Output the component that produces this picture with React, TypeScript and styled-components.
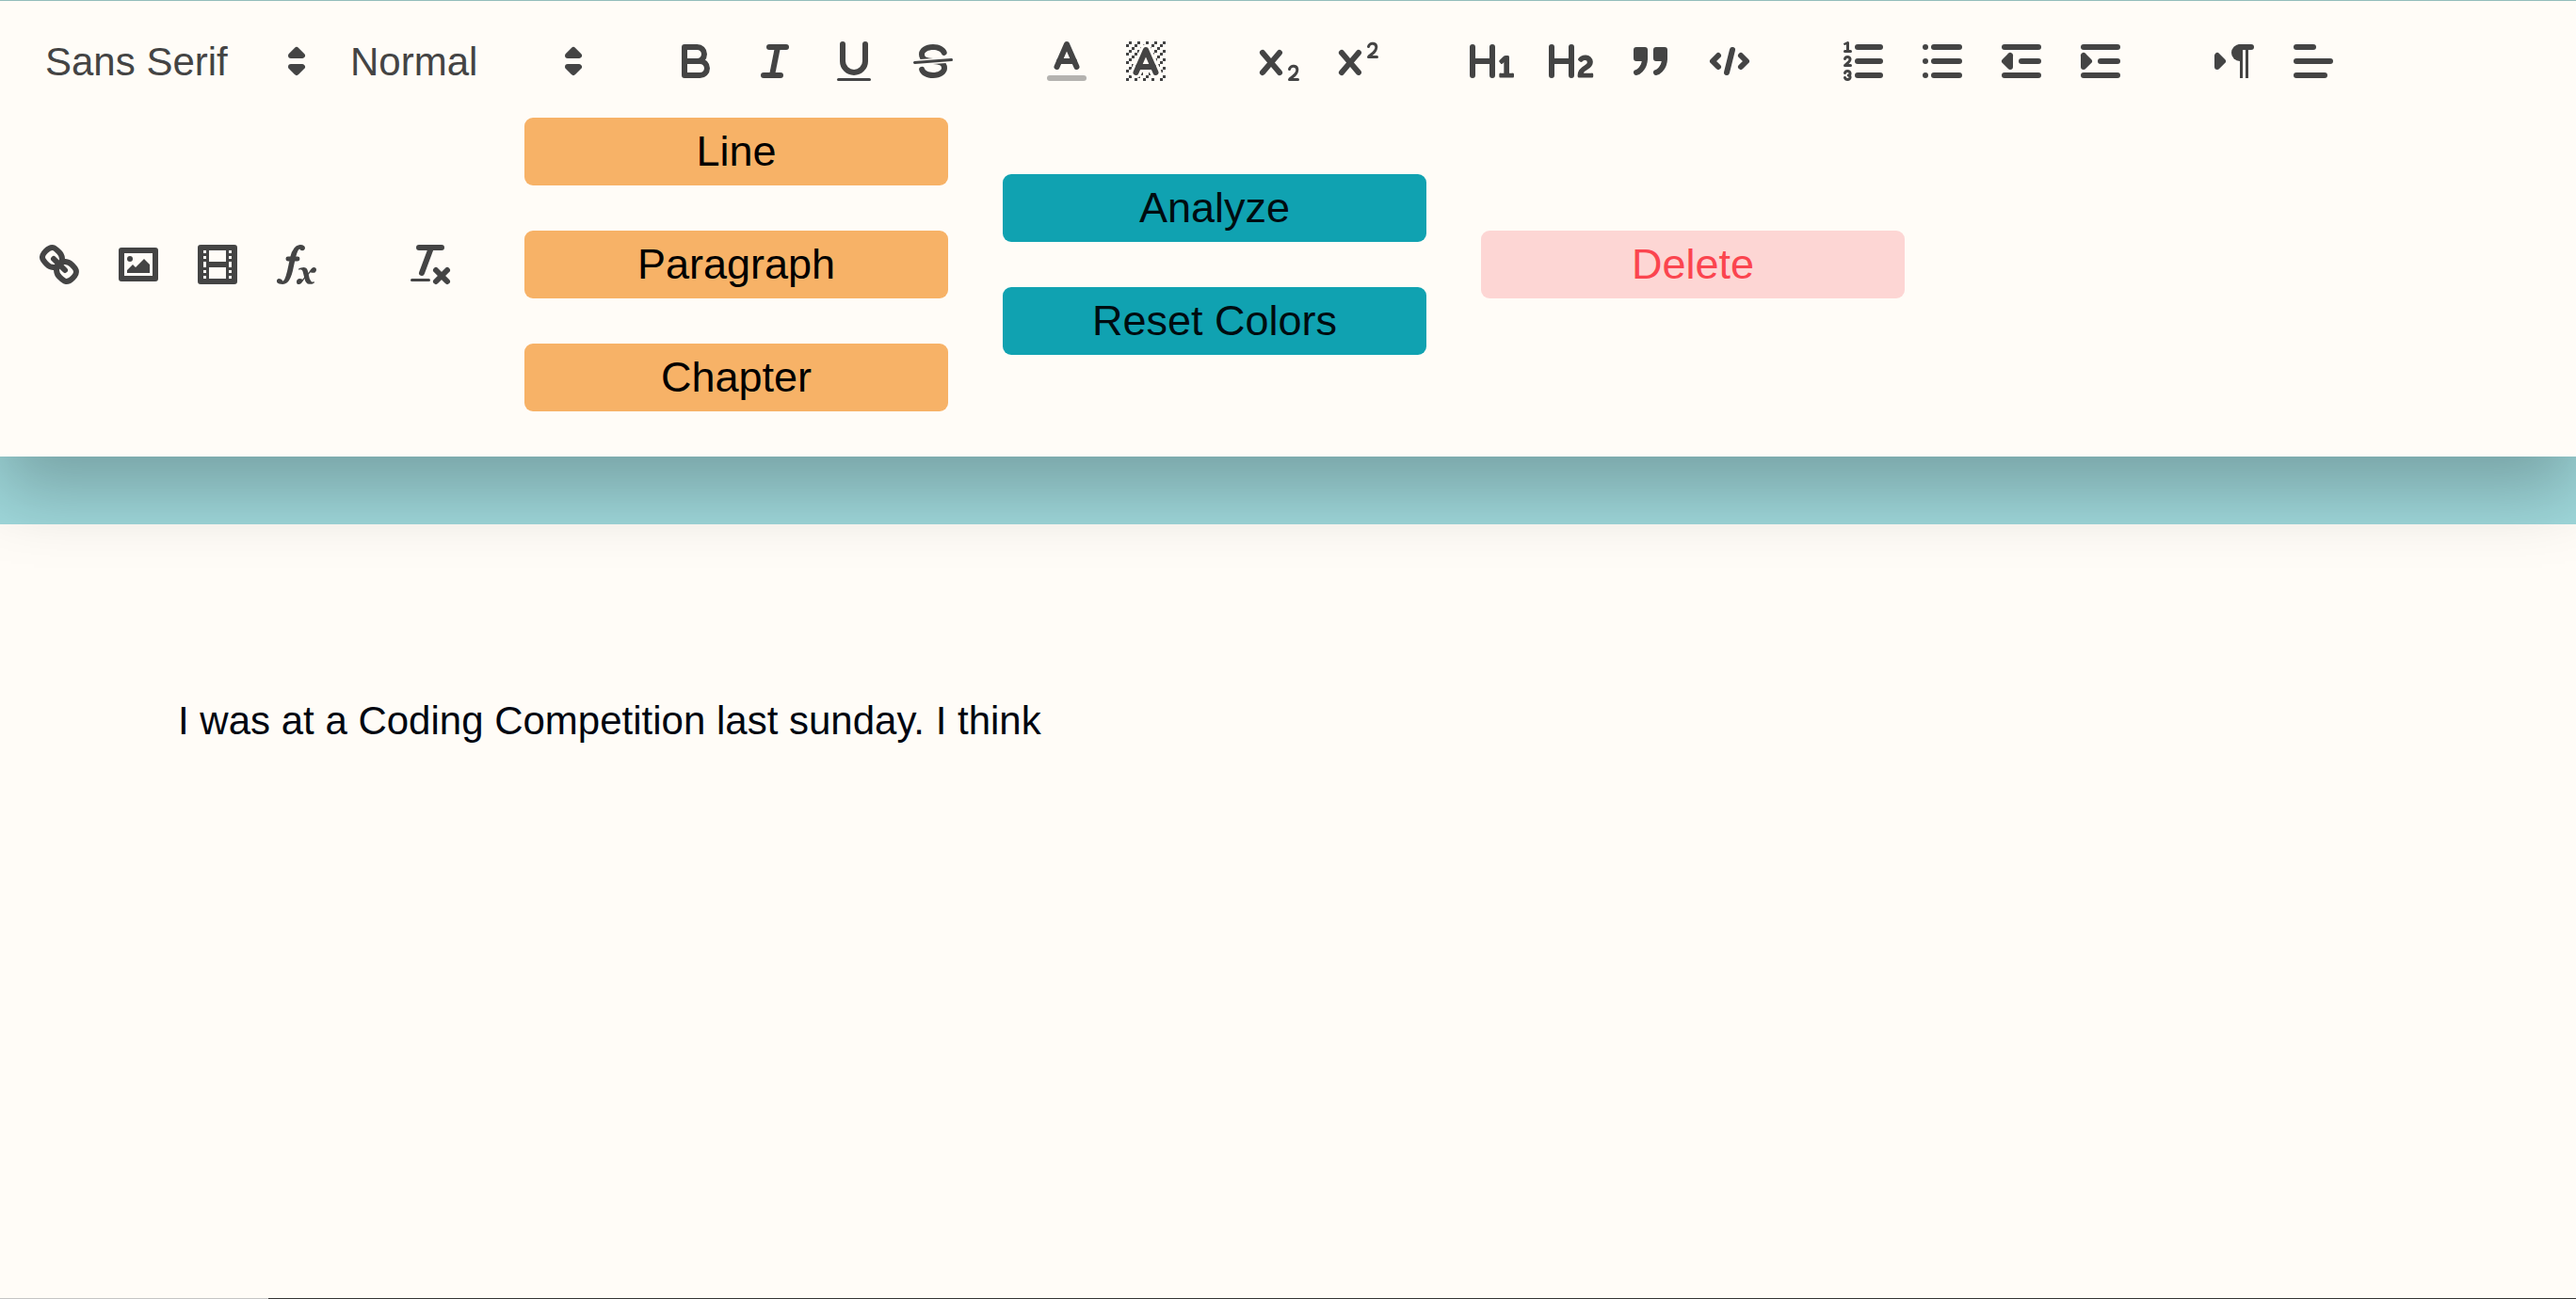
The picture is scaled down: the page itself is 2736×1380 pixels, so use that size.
import React from "react";
import styled, { createGlobalStyle } from "styled-components";

const ink = "#444";
const paper = "#fffcf7";

const GlobalStyle = createGlobalStyle`
  * { box-sizing: border-box; }
  body {
    margin: 0;
    background: #9fd8db;
    font-family: "Liberation Sans", Arial, Helvetica, sans-serif;
  }
`;

const Page = styled.div`
  display: flex;
  flex-direction: column;
  min-height: 100vh;
`;

const Toolbar = styled.div`
  position: relative;
  z-index: 1;
  display: flex;
  flex-wrap: wrap;
  align-items: center;
  column-gap: 58px;
  padding: 28px 21px 24px;
  border-top: 1px solid #93bdbb;
  background: ${paper};
  box-shadow: 0 36px 72px rgba(0, 0, 0, 0.25);
`;

const Group = styled.div`
  display: flex;
  align-items: center;
`;

const IconButton = styled.button`
  display: flex;
  width: 84px;
  height: 72px;
  padding: 9px 15px;
  border: 0;
  background: none;
  cursor: pointer;
`;

const Icon = styled.svg`
  display: block;
  width: 54px;
  height: 54px;
  fill: ${ink};
  stroke: none;

  .s {
    fill: none;
    stroke: ${ink};
    stroke-width: 2;
    stroke-linecap: round;
    stroke-linejoin: round;
  }
  .thin { stroke-width: 1; }
  .solid { fill: ${ink}; }
  .even { fill-rule: evenodd; }
  .faint { opacity: 0.4; }
`;

const Picker = styled.label<{ $width: number }>`
  display: grid;
  align-items: center;
  width: ${(p) => p.$width}px;
  height: 72px;

  > * { grid-area: 1 / 1; }
  > svg {
    justify-self: end;
    margin-right: 3px;
    pointer-events: none;
  }
`;

const PickerSelect = styled.select`
  width: 100%;
  height: 72px;
  padding: 0 0 0 24px;
  border: 3px solid transparent;
  appearance: none;
  background: none;
  color: ${ink};
  font-family: inherit;
  font-size: 42px;
  font-weight: 500;
  cursor: pointer;
`;

const ActionColumn = styled.div`
  display: flex;
  flex-direction: column;
  gap: 48px;
  padding: 24px 0;
`;

const tones = {
  select: { background: "#f7b267", color: "#000" },
  run: { background: "#10a2b1", color: "#000c10" },
  danger: { background: "#fdd6d4", color: "#fb454f" },
};

const ActionButton = styled.button<{ $tone: keyof typeof tones }>`
  width: 450px;
  height: 72px;
  padding: 0;
  border: 0;
  border-radius: 9px;
  background: ${(p) => tones[p.$tone].background};
  color: ${(p) => tones[p.$tone].color};
  font-family: inherit;
  font-size: 45px;
  cursor: pointer;
`;

const Editor = styled.textarea`
  flex: 1;
  display: block;
  margin: 72px 0 0;
  padding: 179px 189px;
  border: 0;
  outline: 0;
  resize: none;
  background: ${paper};
  color: #000610;
  font-family: inherit;
  font-size: 42px;
  line-height: 60px;
`;

const BottomEdge = styled.div`
  display: flex;
  height: 1px;
  background: #333;
`;

const BottomEdgeStart = styled.div`
  width: 285px;
  background: #c4c4c4;
`;

const dots = [
  [4, 4], [2, 6], [3, 5], [4, 7], [2, 12], [2, 9], [2, 15], [3, 8], [12, 2], [11, 3],
  [2, 3], [6, 2], [3, 2], [5, 3], [9, 2], [15, 14], [13, 7], [15, 5], [14, 6], [15, 8],
  [14, 9], [14, 3], [15, 2], [12, 5], [13, 4], [9, 14], [8, 15], [5, 15], [11, 15],
  [14, 15], [15, 11],
];

const icons = {
  bold: (
    <>
      <path className="s" d="M5,4H9.5A2.5,2.5,0,0,1,12,6.5v0A2.5,2.5,0,0,1,9.5,9H5A0,0,0,0,1,5,9V4A0,0,0,0,1,5,4Z" />
      <path className="s" d="M5,9h5.5A2.5,2.5,0,0,1,13,11.5v0A2.5,2.5,0,0,1,10.5,14H5a0,0,0,0,1,0,0V9A0,0,0,0,1,5,9Z" />
    </>
  ),
  italic: (
    <>
      <line className="s" x1="7" x2="13" y1="4" y2="4" />
      <line className="s" x1="5" x2="11" y1="14" y2="14" />
      <line className="s" x1="8" x2="10" y1="14" y2="4" />
    </>
  ),
  underline: (
    <>
      <path className="s" d="M5,3V9a4.012,4.012,0,0,0,4,4H9a4.012,4.012,0,0,0,4-4V3" />
      <rect height="1" rx="0.5" ry="0.5" width="12" x="3" y="15" />
    </>
  ),
  strike: (
    <>
      <line className="s thin" x1="15.5" x2="2.5" y1="8.5" y2="9.5" />
      <path d="M9.007,8C6.542,7.791,6,7.519,6,6.5,6,5.792,7.283,5,9,5c1.571,0,2.765.679,2.969,1.309a1,1,0,0,0,1.9-.617C13.356,4.106,11.354,3,9,3,6.2,3,4,4.538,4,6.5a3.2,3.2,0,0,0,.5,1.843Z" />
      <path d="M8.984,10C11.457,10.208,12,10.479,12,11.5c0,.708-1.283,1.5-3,1.5-1.571,0-2.765-.679-2.969-1.309a1,1,0,1,0-1.9.617C4.644,13.894,6.646,15,9,15c2.8,0,5-1.538,5-3.5a3.2,3.2,0,0,0-.5-1.843Z" />
    </>
  ),
  color: (
    <>
      <line className="s faint" x1="3" x2="15" y1="15" y2="15" />
      <polyline className="s" points="5.5 11 9 3 12.5 11" />
      <line className="s" x1="11.63" x2="6.38" y1="9" y2="9" />
    </>
  ),
  background: (
    <>
      {dots.map(([x, y]) => (
        <rect key={`${x}-${y}`} x={x} y={y} width="1" height="1" />
      ))}
      <polygon points="6 6.868 6 6 5 6 5 7 5.942 7 6 6.868" />
      <polygon points="6.817 5 6 5 6 6 6.38 6 6.817 5" />
      <polygon points="4 11.439 4 11 3 11 3 12 3.755 12 4 11.439" />
      <polygon points="4.63 10 4 10 4 11 4.192 11 4.63 10" />
      <path d="M10.832,4.2L11,4.582V4H10.708A1.948,1.948,0,0,1,10.832,4.2Z" />
      <path d="M7,4.582L7.168,4.2A1.929,1.929,0,0,1,7.292,4H7V4.582Z" />
      <path d="M8,13H7.683l-0.351.8a1.933,1.933,0,0,1-.124.2H8V13Z" />
      <path d="M9,3H8V3.282A1.985,1.985,0,0,1,9,3Z" />
      <polygon points="13.447 10.174 13.469 10.225 13.472 10.232 13.808 11 14 11 14 10 13.37 10 13.447 10.174" />
      <path d="M3.775,14H3v1H4V14.314A1.97,1.97,0,0,1,3.775,14Z" />
      <polygon points="12 6.868 12 6 11.62 6 12 6.868" />
      <polygon points="12.933 9 13 9 13 8 12.495 8 12.933 9" />
      <path d="M6,14.926V15H7V14.316A1.993,1.993,0,0,1,6,14.926Z" />
      <path d="M10.668,13.8L10.317,13H10v1h0.792A1.947,1.947,0,0,1,10.668,13.8Z" />
      <path d="M14.332,12.2a1.99,1.99,0,0,1,.166.8H15V12H14.245Z" />
      <polyline className="s" points="5.5 13 9 5 12.5 13" />
      <line className="s" x1="11.63" x2="6.38" y1="11" y2="11" />
    </>
  ),
  subscript: (
    <>
      <path d="M15.5,15H13.861a3.858,3.858,0,0,0,1.914-2.975,1.8,1.8,0,0,0-1.6-1.751A1.921,1.921,0,0,0,12.021,11.7a0.50013,0.50013,0,1,0,.957.291h0a0.914,0.914,0,0,1,1.053-.725,0.81,0.81,0,0,1,.744.762c0,1.076-1.16971,1.86982-1.93971,2.43082A1.45639,1.45639,0,0,0,12,15.5a0.5,0.5,0,0,0,.5.5h3A0.5,0.5,0,0,0,15.5,15Z" />
      <path d="M9.65,5.241a1,1,0,0,0-1.409.108L6,7.964,3.759,5.349A1,1,0,0,0,2.192,6.59178Q2.21541,6.6213,2.241,6.649L4.684,9.5,2.241,12.35A1,1,0,0,0,3.71,13.70722q0.02557-.02768.049-0.05722L6,11.036,8.241,13.65a1,1,0,1,0,1.567-1.24277Q9.78459,12.3777,9.759,12.35L7.316,9.5,9.759,6.651A1,1,0,0,0,9.65,5.241Z" />
    </>
  ),
  superscript: (
    <>
      <path d="M15.5,7H13.861a4.015,4.015,0,0,0,1.914-2.975,1.8,1.8,0,0,0-1.6-1.751A1.922,1.922,0,0,0,12.021,3.7a0.5,0.5,0,1,0,.957.291,0.917,0.917,0,0,1,1.053-.725,0.81,0.81,0,0,1,.744.762c0,1.077-1.164,1.925-1.934,2.486A1.423,1.423,0,0,0,12,7.5a0.5,0.5,0,0,0,.5.5h3A0.5,0.5,0,0,0,15.5,7Z" />
      <path d="M9.651,5.241a1,1,0,0,0-1.41.108L6,7.964,3.759,5.349a1,1,0,1,0-1.519,1.3L4.683,9.5,2.241,12.35a1,1,0,1,0,1.519,1.3L6,11.036,8.241,13.65a1,1,0,0,0,1.519-1.3L7.317,9.5,9.759,6.651A1,1,0,0,0,9.651,5.241Z" />
    </>
  ),
  header1: (
    <path d="M10,4V14a1,1,0,0,1-2,0V10H3v4a1,1,0,0,1-2,0V4A1,1,0,0,1,3,4V8H8V4a1,1,0,0,1,2,0Zm6.06787,9.209H14.98975V7.59863a.54085.54085,0,0,0-.605-.60547h-.62744a1.01119,1.01119,0,0,0-.748.29688L11.645,8.56641a.5435.5435,0,0,0-.022.8584l.28613.30762a.53861.53861,0,0,0,.84717.0332l.09912-.08789a1.2137,1.2137,0,0,0,.2417-.35254h.02246s-.01123.30859-.01123.60547V13.209H12.041a.54085.54085,0,0,0-.605.60547v.43945a.54085.54085,0,0,0,.605.60547h4.02686a.54085.54085,0,0,0,.605-.60547v-.43945A.54085.54085,0,0,0,16.06787,13.209Z" />
  ),
  header2: (
    <path d="M16.73975,13.81445v.43945a.54085.54085,0,0,1-.605.60547H11.855a.58392.58392,0,0,1-.64893-.60547V14.0127c0-2.90527,3.39941-3.42187,3.39941-4.55469a.77675.77675,0,0,0-.84717-.78125,1.17684,1.17684,0,0,0-.83594.38477c-.2749.26367-.561.374-.85791.13184l-.4292-.34082c-.30811-.24219-.38525-.51758-.1543-.81445a2.97155,2.97155,0,0,1,2.45361-1.17676,2.45393,2.45393,0,0,1,2.68408,2.40918c0,2.45312-3.1792,2.92676-3.27832,3.93848h2.79443A.54085.54085,0,0,1,16.73975,13.81445ZM9,3A.99974.99974,0,0,0,8,4V8H3V4A1,1,0,0,0,1,4V14a1,1,0,0,0,2,0V10H8v4a1,1,0,0,0,2,0V4A.99974.99974,0,0,0,9,3Z" />
  ),
  blockquote: (
    <>
      <rect className="s solid" height="3" width="3" x="4" y="5" />
      <rect className="s solid" height="3" width="3" x="11" y="5" />
      <path className="s solid even" d="M7,8c0,4.031-3,5-3,5" />
      <path className="s solid even" d="M14,8c0,4.031-3,5-3,5" />
    </>
  ),
  code: (
    <>
      <polyline className="s" points="5 7 3 9 5 11" />
      <polyline className="s" points="13 7 15 9 13 11" />
      <line className="s" x1="10" x2="8" y1="5" y2="13" />
    </>
  ),
  ordered: (
    <>
      <line className="s" x1="7" x2="15" y1="4" y2="4" />
      <line className="s" x1="7" x2="15" y1="9" y2="9" />
      <line className="s" x1="7" x2="15" y1="14" y2="14" />
      <line className="s thin" x1="2.5" x2="4.5" y1="5.5" y2="5.5" />
      <path d="M3.5,6A0.5,0.5,0,0,1,3,5.5V3.085l-0.276.138A0.5,0.5,0,0,1,2.053,3c-0.124-.247-0.023-0.324.224-0.447l1-.5A0.5,0.5,0,0,1,4,2.5v3A0.5,0.5,0,0,1,3.5,6Z" />
      <path className="s thin" d="M4.5,10.5h-2c0-.234,1.85-1.076,1.85-2.234A0.959,0.959,0,0,0,2.5,8.156" />
      <path className="s thin" d="M2.5,14.846a0.959,0.959,0,0,0,1.85-.109A0.7,0.7,0,0,0,3.75,14a0.688,0.688,0,0,0,.6-0.736,0.959,0.959,0,0,0-1.85-.109" />
    </>
  ),
  bullet: (
    <>
      <line className="s" x1="6" x2="15" y1="4" y2="4" />
      <line className="s" x1="6" x2="15" y1="9" y2="9" />
      <line className="s" x1="6" x2="15" y1="14" y2="14" />
      <line className="s" x1="3" x2="3" y1="4" y2="4" />
      <line className="s" x1="3" x2="3" y1="9" y2="9" />
      <line className="s" x1="3" x2="3" y1="14" y2="14" />
    </>
  ),
  outdent: (
    <>
      <line className="s" x1="3" x2="15" y1="14" y2="14" />
      <line className="s" x1="3" x2="15" y1="4" y2="4" />
      <line className="s" x1="9" x2="15" y1="9" y2="9" />
      <polyline className="s solid" points="5 7 5 11 3 9 5 7" />
    </>
  ),
  indent: (
    <>
      <line className="s" x1="3" x2="15" y1="14" y2="14" />
      <line className="s" x1="3" x2="15" y1="4" y2="4" />
      <line className="s" x1="9" x2="15" y1="9" y2="9" />
      <polyline className="s solid" points="3 7 3 11 5 9 3 7" />
    </>
  ),
  direction: (
    <>
      <polygon className="s solid" points="3 11 5 9 3 7 3 11" />
      <line className="s solid" x1="15" x2="11" y1="4" y2="4" />
      <path d="M11,3a3,3,0,0,0,0,6h1V3H11Z" />
      <rect height="11" width="1" x="11" y="4" />
      <rect height="11" width="1" x="13" y="4" />
    </>
  ),
  align: (
    <>
      <line className="s" x1="3" x2="15" y1="9" y2="9" />
      <line className="s" x1="3" x2="13" y1="14" y2="14" />
      <line className="s" x1="3" x2="9" y1="4" y2="4" />
    </>
  ),
  link: (
    <>
      <line className="s" x1="7" x2="11" y1="7" y2="11" />
      <path className="s even" d="M8.9,4.577a3.476,3.476,0,0,1,.36,4.679A3.476,3.476,0,0,1,4.577,8.9C3.185,7.5,2.035,6.4,4.217,4.217S7.5,3.185,8.9,4.577Z" />
      <path className="s even" d="M13.423,9.1a3.476,3.476,0,0,0-4.679-.36,3.476,3.476,0,0,0,.36,4.679c1.392,1.392,2.5,2.542,4.679.36S14.815,10.5,13.423,9.1Z" />
    </>
  ),
  image: (
    <>
      <rect className="s" height="10" width="12" x="3" y="4" />
      <circle cx="6" cy="7" r="1" />
      <polyline className="even" points="5 12 5 11 7 9 8 10 11 7 13 9 13 12 5 12" />
    </>
  ),
  video: (
    <>
      <rect className="s" height="12" width="12" x="3" y="3" />
      <rect height="12" width="1" x="5" y="3" />
      <rect height="12" width="1" x="12" y="3" />
      <rect height="2" width="8" x="5" y="8" />
      {[5, 7, 10, 12].map((y) => (
        <React.Fragment key={y}>
          <rect height="1" width="3" x="3" y={y} />
          <rect height="1" width="3" x="12" y={y} />
        </React.Fragment>
      ))}
    </>
  ),
  formula: (
    <>
      <path d="M11.759,2.482a2.561,2.561,0,0,0-3.53.607A7.656,7.656,0,0,0,6.8,6.2C6.109,9.188,5.275,14.677,4.15,14.927a1.545,1.545,0,0,0-1.3-.933A0.922,0.922,0,0,0,2,15.036S1.954,16,4.119,16s3.091-2.691,3.7-5.553c0.177-.826.36-1.726,0.554-2.6L8.775,6.2c0.381-1.421.807-2.521,1.306-2.676a1.014,1.014,0,0,0,1.02.56A0.966,0.966,0,0,0,11.759,2.482Z" />
      <rect height="1.6" rx="0.8" ry="0.8" width="5" x="5.15" y="6.2" />
      <path d="M13.663,12.027a1.662,1.662,0,0,1,.266-0.276q0.193,0.069.456,0.138a2.1,2.1,0,0,0,.535.069,1.075,1.075,0,0,0,.767-0.3,1.044,1.044,0,0,0,.314-0.8,0.84,0.84,0,0,0-.238-0.619,0.8,0.8,0,0,0-.594-0.239,1.154,1.154,0,0,0-.781.3,4.607,4.607,0,0,0-.781,1q-0.091.15-.218,0.346l-0.246.38c-0.068-.288-0.137-0.582-0.212-0.885-0.459-1.847-2.494-.984-2.941-0.8-0.482.2-.353,0.647-0.094,0.529a0.869,0.869,0,0,1,1.281.585c0.217,0.751.377,1.436,0.527,2.038a5.688,5.688,0,0,1-.362.467,2.69,2.69,0,0,1-.264.271q-0.221-.08-0.471-0.147a2.029,2.029,0,0,0-.522-0.066,1.079,1.079,0,0,0-.768.3A1.058,1.058,0,0,0,9,15.131a0.82,0.82,0,0,0,.832.852,1.134,1.134,0,0,0,.787-0.3,5.11,5.11,0,0,0,.776-0.993q0.141-.219.215-0.34c0.046-.076.122-0.194,0.223-0.346a2.786,2.786,0,0,0,.918,1.726,2.582,2.582,0,0,0,2.376-.185c0.317-.181.212-0.565,0-0.494A0.807,0.807,0,0,1,14.176,15a5.159,5.159,0,0,1-.913-2.446l0,0Q13.487,12.24,13.663,12.027Z" />
    </>
  ),
  clean: (
    <>
      <line className="s" x1="5" x2="13" y1="3" y2="3" />
      <line className="s" x1="6" x2="9.35" y1="12" y2="3" />
      <line className="s" x1="11" x2="15" y1="11" y2="15" />
      <line className="s" x1="15" x2="11" y1="11" y2="15" />
      <rect height="1" rx="0.5" ry="0.5" width="7" x="2" y="14" />
    </>
  ),
  arrows: (
    <>
      <polygon className="s" points="7 11 9 13 11 11 7 11" />
      <polygon className="s" points="7 7 9 5 11 7 7 7" />
    </>
  ),
};

type IconName = keyof typeof icons;

function Glyph({ name }: { name: IconName }) {
  return (
    <Icon viewBox="0 0 18 18" aria-hidden="true">
      {icons[name]}
    </Icon>
  );
}

function Tools({ names }: { names: IconName[] }) {
  return (
    <Group>
      {names.map((name) => (
        <IconButton key={name} type="button" aria-label={name}>
          <Glyph name={name} />
        </IconButton>
      ))}
    </Group>
  );
}

function Dropdown({ label, width, options }: { label: string; width: number; options: string[] }) {
  return (
    <Picker $width={width}>
      <PickerSelect aria-label={label}>
        {options.map((option) => (
          <option key={option}>{option}</option>
        ))}
      </PickerSelect>
      <Glyph name="arrows" />
    </Picker>
  );
}

export default function App() {
  return (
    <Page>
      <GlobalStyle />
      <Toolbar role="toolbar" aria-label="Formatting">
        <Group>
          <Dropdown label="Font" width={324} options={["Sans Serif"]} />
          <Dropdown label="Heading" width={294} options={["Normal"]} />
        </Group>
        <Tools names={["bold", "italic", "underline", "strike"]} />
        <Tools names={["color", "background"]} />
        <Tools names={["subscript", "superscript"]} />
        <Tools names={["header1", "header2", "blockquote", "code"]} />
        <Tools names={["ordered", "bullet", "outdent", "indent"]} />
        <Tools names={["direction", "align"]} />
        <Tools names={["link", "image", "video", "formula"]} />
        <Tools names={["clean"]} />
        <ActionColumn>
          <ActionButton type="button" $tone="select">Line</ActionButton>
          <ActionButton type="button" $tone="select">Paragraph</ActionButton>
          <ActionButton type="button" $tone="select">Chapter</ActionButton>
        </ActionColumn>
        <ActionColumn>
          <ActionButton type="button" $tone="run">Analyze</ActionButton>
          <ActionButton type="button" $tone="run">Reset Colors</ActionButton>
        </ActionColumn>
        <ActionColumn>
          <ActionButton type="button" $tone="danger">Delete</ActionButton>
        </ActionColumn>
      </Toolbar>
      <Editor
        aria-label="Document"
        spellCheck={false}
        defaultValue="I was at a Coding Competition last sunday. I think"
      />
      <BottomEdge>
        <BottomEdgeStart />
      </BottomEdge>
    </Page>
  );
}
